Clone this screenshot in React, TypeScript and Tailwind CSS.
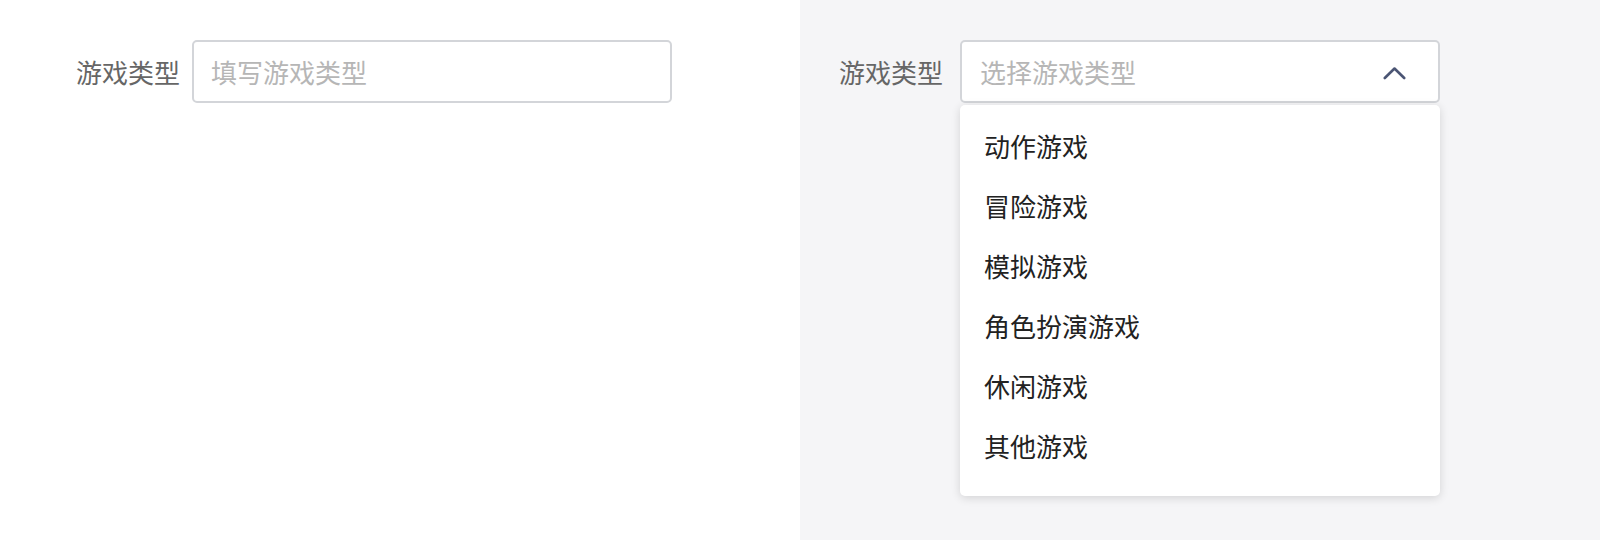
import React from "react";

const font = { fontFamily: '"Noto Sans CJK SC", "Noto Sans", sans-serif' };

const items = ["动作游戏", "冒险游戏", "模拟游戏", "角色扮演游戏", "休闲游戏", "其他游戏"];

export default function App() {
  return (
    <div className="flex w-[1600px] h-[540px]" style={font}>
      <div className="w-[800px] h-full bg-white pt-[40px] pl-[76px]">
        <div className="flex items-center">
          <span className="text-[26px] leading-none text-[#666666]">游戏类型</span>
          <div className="ml-[12px] w-[480px] h-[63px] border-2 border-[#d3d5d9] rounded-[5px] flex items-center pl-[17px] bg-white">
            <span className="text-[26px] leading-none text-[#b6b6b6]">填写游戏类型</span>
          </div>
        </div>
      </div>
      <div className="w-[800px] h-full bg-[#f5f5f7] pt-[40px] pl-[39px]">
        <div className="flex items-center">
          <span className="text-[26px] leading-none text-[#666666]">游戏类型</span>
          <div className="relative ml-[17px]">
            <div className="w-[480px] h-[63px] border-2 border-[#d3d5d9] rounded-[5px] flex items-center justify-between pl-[18px] pr-[32px] bg-white">
              <span className="text-[26px] leading-none text-[#b6b6b6]">选择游戏类型</span>
              <svg width="23" height="14" viewBox="0 0 23 14" className="mt-[2px]">
                <polyline points="1.8,12 11.5,2.5 21.2,12" fill="none" stroke="#4b5574" strokeWidth="2.6" strokeLinecap="round" strokeLinejoin="round" />
              </svg>
            </div>
            <div className="absolute left-0 top-[65px] w-[480px] h-[391px] bg-white rounded-[5px] shadow-[0_2px_10px_rgba(0,0,0,0.14)] pt-[11px] pl-[24px]">
              {items.map((t) => (
                <div key={t} className="h-[60px] flex items-center text-[26px] leading-none text-[#222222]">
                  {t}
                </div>
              ))}
            </div>
          </div>
        </div>
      </div>
    </div>
  );
}
